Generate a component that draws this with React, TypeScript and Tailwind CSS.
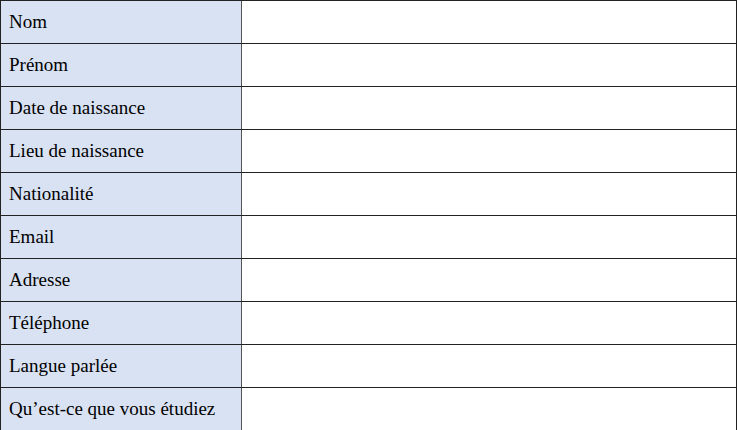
const rows = [
  "Nom",
  "Prénom",
  "Date de naissance",
  "Lieu de naissance",
  "Nationalité",
  "Email",
  "Adresse",
  "Téléphone",
  "Langue parlée",
  "Qu’est-ce que vous étudiez",
];

export default function App() {
  return (
    <div className="w-[738px] h-[430px] overflow-hidden bg-white">
      <div className="w-[737px] border-l border-r border-[#222]">
        {rows.map((label) => (
          <div key={label} className="flex h-[43px] border-t border-[#222]">
            <div className="w-[241px] shrink-0 border-r border-[#555] bg-[#d9e2f3] pl-2 pt-[10px] font-['Liberation_Serif',serif] text-[19px] leading-[22px] text-black">
              {label}
            </div>
            <div className="flex-1" />
          </div>
        ))}
      </div>
    </div>
  );
}
